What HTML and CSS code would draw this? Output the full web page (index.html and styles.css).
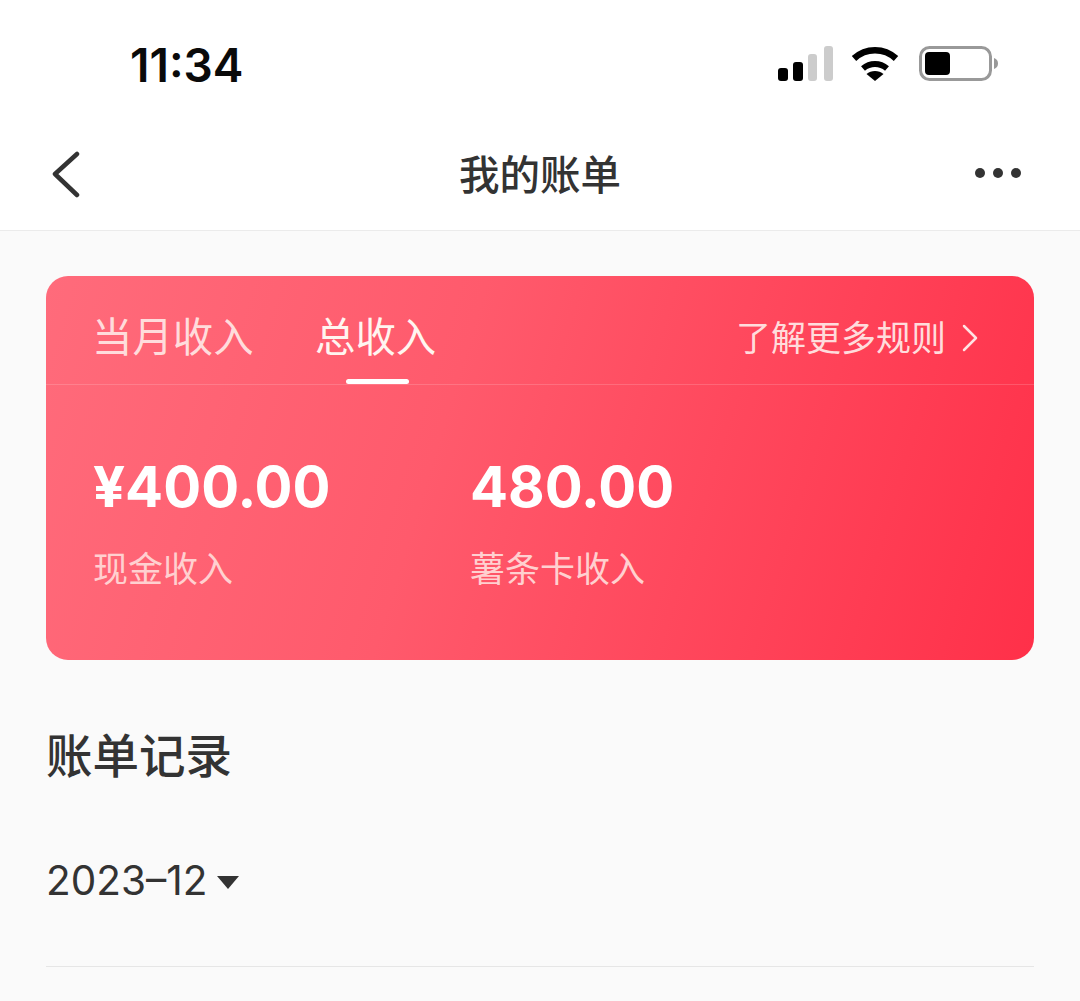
FILE: index.html
```html
<!DOCTYPE html>
<html lang="zh">
<head>
<meta charset="utf-8">
<title>我的账单</title>
<link rel="stylesheet" href="styles.css">
</head>
<body>
<div class="page">
  <header class="status">
    <span class="time">11:34</span>
    <div class="status-icons">
      <svg class="signal" width="56" height="36" viewBox="0 0 56 36">
        <rect x="0" y="22" width="10" height="13" rx="3" fill="#000"/>
        <rect x="15" y="16" width="10" height="19" rx="3" fill="#000"/>
        <rect x="30" y="8" width="9" height="27" rx="3" fill="#ccc"/>
        <rect x="46" y="0" width="9" height="35" rx="3" fill="#ccc"/>
      </svg>
      <svg class="wifi" width="48" height="36" viewBox="0 0 48 36">
        <path d="M3 12.500 C15 1.500 33 1.500 45 12.500" fill="none" stroke="#000" stroke-width="6.500"/>
        <path d="M12 22.500 C19 16.500 29 16.500 36 22.500" fill="none" stroke="#000" stroke-width="6"/>
        <path d="M15.500 28 C20 24 28 24 32.500 28 L24 35 Z" fill="#000"/>
      </svg>
      <svg class="battery" width="80" height="36" viewBox="0 0 80 36">
        <rect x="1.500" y="1.500" width="70" height="32" rx="9" fill="#fff" stroke="#999" stroke-width="3"/>
        <rect x="6" y="6" width="25" height="23" rx="4" fill="#000"/>
        <path d="M75 12 C78 13 79 15 79 17.500 C79 20 78 22 75 23 Z" fill="#999"/>
      </svg>
    </div>
  </header>
  <nav class="navbar">
    <svg class="back" width="30" height="48" viewBox="0 0 30 48">
      <path d="M26 4 L4 24 L26 45" fill="none" stroke="#333" stroke-width="4.500" stroke-linecap="round" stroke-linejoin="round"/>
    </svg>
    <h1 class="title">我的账单</h1>
    <div class="more"><i></i><i></i><i></i></div>
  </nav>
  <main class="content">
    <section class="card">
      <div class="tabs">
        <span class="tab">当月收入</span>
        <span class="tab active">总收入</span>
        <span class="rules">了解更多规则
          <svg width="16" height="28" viewBox="0 0 16 28"><path d="M2 2 L14 14 L2 26" fill="none" stroke="#ffe3e3" stroke-width="2.500" stroke-linecap="round" stroke-linejoin="round"/></svg>
        </span>
      </div>
      <div class="stats">
        <div class="stat cash">
          <div class="amount">¥400.00</div>
          <div class="label">现金收入</div>
        </div>
        <div class="stat">
          <div class="amount">480.00</div>
          <div class="label">薯条卡收入</div>
        </div>
      </div>
    </section>
    <h2 class="records">账单记录</h2>
    <div class="month">2023–12<span class="caret"></span></div>
    <div class="divider"></div>
  </main>
</div>
</body>
</html>
```
FILE: styles.css
```css
* { box-sizing: border-box; }
html, body { margin: 0; padding: 0; }
body {
  width: 1080px;
  height: 1001px;
  overflow: hidden;
  background: #fafafa;
  color: #333;
  font-family: "Inter", "Liberation Sans", "Noto Sans CJK SC", sans-serif;
}
.page { height: 1001px; display: flex; flex-direction: column; }
.status {
  height: 118px;
  background: #fff;
  display: flex;
  justify-content: space-between;
  padding: 37px 81px 0 130px;
}
.time {
  font-size: 46px;
  line-height: 56px;
  font-weight: 600;
  color: #0a0a0a;
}
.status-icons { display: flex; align-items: flex-start; padding-top: 9px; }
.signal { margin-right: 17px; }
.wifi { margin-right: 20px; }
.navbar {
  height: 113px;
  background: #fff;
  border-bottom: 1px solid #ebebeb;
  display: flex;
  align-items: center;
  justify-content: space-between;
  padding: 0 58px 0 51px;
  position: relative;
}
.title {
  position: absolute;
  left: 0;
  right: 0;
  margin: 3px 0 0;
  text-align: center;
  font-size: 40.500px;
  font-weight: 500;
  color: #333;
  line-height: 56px;
}
.more { display: flex; gap: 8px; margin-top: -2px; margin-right: 1px; }
.more i { width: 10px; height: 10px; border-radius: 50%; background: #333; display: block; }
.content { padding: 45px 46px 0; flex: 1; }
.card {
  height: 384px;
  border-radius: 22px;
  background: linear-gradient(107deg, #ff6b7b 0%, #ff5a6c 40%, #ff3049 100%);
  color: #fff;
}
.tabs {
  height: 109px;
  border-bottom: 1px solid rgba(255, 255, 255, 0.16);
  display: flex;
  align-items: center;
  padding: 0 56px 0 46px;
}
.tab {
  font-size: 40.400px;
  line-height: 56px;
  color: #ffdcdc;
  margin-right: 61.500px;
  margin-top: 16px;
  position: relative;
}
.tab.active { color: #fff5f0; margin-right: 0; }
.tab.active::after {
  content: "";
  position: absolute;
  left: 31px;
  width: 63px;
  height: 5px;
  bottom: -18px;
  border-radius: 3px;
  background: #fff;
}
.rules {
  margin-left: auto;
  font-size: 35px;
  line-height: 50px;
  color: #ffdcdc;
  display: flex;
  align-items: center;
  gap: 16px;
  margin-top: 16px;
}
.stats { display: flex; padding: 67px 0 0 47px; }
.stat.cash { width: 377px; }
.amount {
  font-size: 56.300px;
  line-height: 70px;
  font-weight: 700;
  color: #fff;
}
.label {
  margin-top: 23px;
  font-size: 35px;
  line-height: 48px;
  color: #ffd0d0;
}
.records {
  margin: 64px 0 0;
  font-size: 46.500px;
  line-height: 64px;
  font-weight: 500;
  color: #333;
}
.month {
  margin-top: 65px;
  font-size: 40.500px;
  line-height: 56px;
  color: #333;
  display: flex;
  align-items: center;
}
.caret {
  width: 0;
  height: 0;
  margin-left: 10px;
  margin-top: 2px;
  border-left: 11px solid transparent;
  border-right: 11px solid transparent;
  border-top: 13px solid #333;
}
.divider { margin-top: 57px; height: 1px; background: #e6e6e6; }
```
